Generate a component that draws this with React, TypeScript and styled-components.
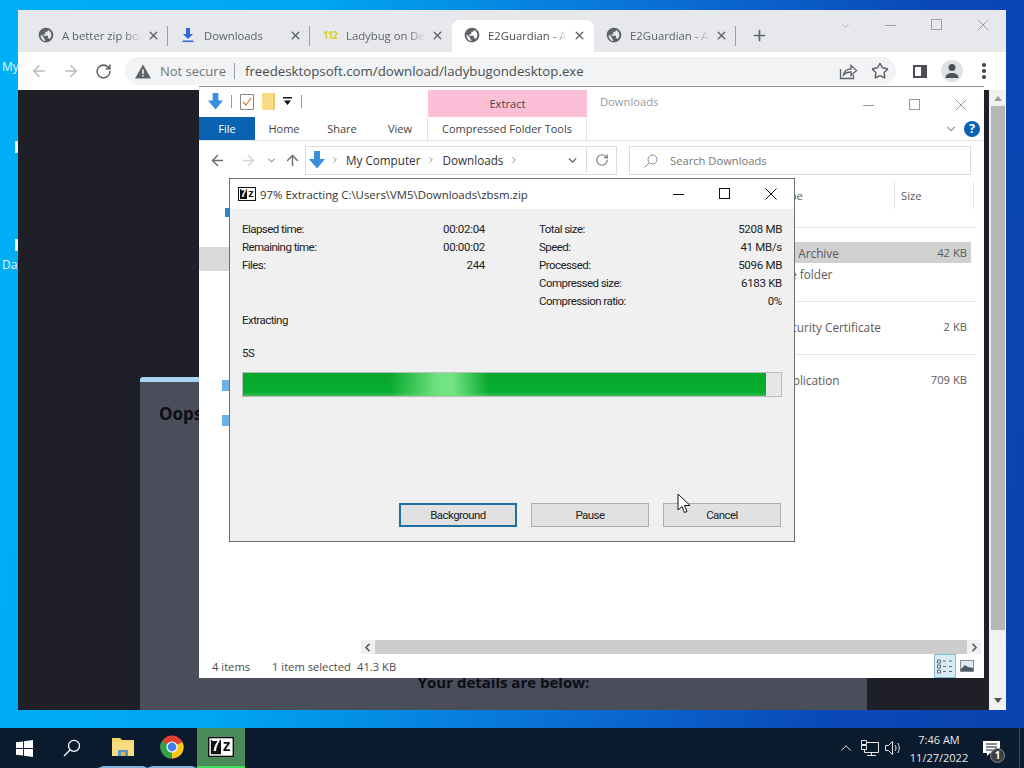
import styled, { createGlobalStyle } from 'styled-components';
import { ArrowLeft, ArrowRight, ArrowUp, ChevronDown, ChevronLeft, ChevronRight, ChevronUp, Plus, RotateCw, Star, X } from 'lucide-react';

const tabs = [
  { title: 'A better zip bomb', icon: 'globe' },
  { title: 'Downloads', icon: 'download' },
  { title: 'Ladybug on Desktop', icon: 'num' },
  { title: 'E2Guardian - Access Denied', icon: 'globe', active: true },
  { title: 'E2Guardian - Access Denied', icon: 'globe' },
];

const leftStats = [
  ['Elapsed time:', '00:02:04'],
  ['Remaining time:', '00:00:02'],
  ['Files:', '244'],
];

const rightStats = [
  ['Total size:', '5208 MB'],
  ['Speed:', '41 MB/s'],
  ['Processed:', '5096 MB'],
  ['Compressed size:', '6183 KB'],
  ['Compression ratio:', '0%'],
];

function Globe() {
  return (
    <svg width="16" height="16" viewBox="0 0 24 24" fill="#5f6368">
      <path d="M12 1C5.9 1 1 5.9 1 12s4.9 11 11 11 11-4.9 11-11S18.1 1 12 1zm-1 19.9c-4-.5-7-3.9-7-7.9 0-.6.1-1.200.2-1.800L9 16v1c0 1.100.9 2 2 2v1.900zm6.900-2.500c-.3-.8-1-1.400-1.900-1.400h-1v-3c0-.6-.4-1-1-1H8v-2h2c.6 0 1-.4 1-1V7h2c1.100 0 2-.9 2-2v-.4c2.900 1.200 5 4.100 5 7.400 0 2.100-.8 4-2.100 5.400z" />
    </svg>
  );
}

function DownloadIcon() {
  return (
    <svg width="16" height="16" viewBox="0 0 16 16" fill="#3367d6">
      <path d="M6 1h4v6h3l-5 5-5-5h3zM2.500 13.500h11V15h-11z" />
    </svg>
  );
}

function BlueArrow({ size = 18 }: { size?: number }) {
  return (
    <svg width={size} height={size} viewBox="0 0 18 18" fill="#3a8fdc">
      <path d="M6 0h6v8h5l-8 9.500L1 8h5z" />
    </svg>
  );
}

function Caption({ kind, color }: { kind: 'min' | 'max' | 'close'; color: string }) {
  return (
    <CaptionButton>
      <svg width="12" height="12" viewBox="0 0 12 12" fill="none" stroke={color} strokeWidth="1">
        {kind === 'min' && <path d="M0 6.500h11" />}
        {kind === 'max' && <rect x="0.500" y="0.500" width="10" height="10" />}
        {kind === 'close' && <path d="M0.500 0.500l11 11M11.500 0.500l-11 11" />}
      </svg>
    </CaptionButton>
  );
}

function SevenZip() {
  return (
    <SevenLogo>
      <SevenDigit>7</SevenDigit>
      <SevenLetter>z</SevenLetter>
    </SevenLogo>
  );
}

function ChromeWindow() {
  return (
    <BrowserWindow>
      <TabStrip>
        {tabs.map((tab, i) => (
          <Tab key={i} $active={tab.active} $sep={!tab.active && i !== 2}>
            <TabIcon>
              {tab.icon === 'globe' && <Globe />}
              {tab.icon === 'download' && <DownloadIcon />}
              {tab.icon === 'num' && <NumIcon>112</NumIcon>}
            </TabIcon>
            <TabTitle $active={tab.active}>{tab.title}</TabTitle>
            <X size={13} strokeWidth={2.6} color="#5f6368" />
          </Tab>
        ))}
        <NewTab>
          <Plus size={17} strokeWidth={2.4} color="#5f6368" />
        </NewTab>
        <StripCaptions>
          <CaptionButton>
            <ChevronDown size={15} strokeWidth={1} color="#a8a8a8" />
          </CaptionButton>
          <Caption kind="min" color="#a0a0a0" />
          <Caption kind="max" color="#a0a0a0" />
          <Caption kind="close" color="#a0a0a0" />
        </StripCaptions>
      </TabStrip>
      <Toolbar>
        <ToolButton><ArrowLeft size={18} color="#b8bbbf" /></ToolButton>
        <ToolButton><ArrowRight size={18} color="#b8bbbf" /></ToolButton>
        <ToolButton><RotateCw size={17} strokeWidth={2.2} color="#5f6368" /></ToolButton>
        <Omnibox>
          <svg width="16" height="15" viewBox="0 0 16 15" fill="#5f6368">
            <path d="M8 0.500L16 14.500H0zM7.200 5.500v4.500h1.600V5.500zM7.200 11v1.600h1.600V11z" fillRule="evenodd" />
          </svg>
          <NotSecure>Not secure</NotSecure>
          <OmniDivider />
          <UrlText>freedesktopsoft.com/download/ladybugondesktop.exe</UrlText>
          <OmniIcon>
            <svg width="20" height="20" viewBox="0 0 20 20" fill="none" stroke="#5f6368" strokeWidth="1.300">
              <path d="M2.500 8v9.500h13V14M5.500 14c.8-4 3.500-6 7.500-6V4.500l5.500 5-5.500 5V11c-3 0-5.500.8-7.500 3z" />
            </svg>
          </OmniIcon>
          <OmniIcon><Star size={18} strokeWidth={2} color="#5f6368" /></OmniIcon>
        </Omnibox>
        <PanelIcon />
        <Avatar>
          <svg width="16" height="16" viewBox="0 0 16 16" fill="#4d5156">
            <circle cx="8" cy="4.500" r="3.500" />
            <path d="M1.500 15c0-3.500 3-5 6.500-5s6.500 1.500 6.500 5z" />
          </svg>
        </Avatar>
        <MenuDots><i /><i /><i /></MenuDots>
      </Toolbar>
      <PageRow>
        <Page>
          <ModalCard>
            <OopsTitle>Oops! There was a problem</OopsTitle>
            <DetailsLine>Your details are below:</DetailsLine>
          </ModalCard>
        </Page>
        <PageScroll>
          <ChevronUpMark />
          <PageThumb />
          <ChevronDownMark />
        </PageScroll>
      </PageRow>
    </BrowserWindow>
  );
}

function ExplorerWindow() {
  return (
    <Explorer>
      <TitleRow>
        <QuickAccess>
          <BlueArrow size={17} />
          <QatSep />
          <svg width="16" height="18" viewBox="0 0 16 18" fill="#fff" stroke="#888">
            <path d="M1.500 1.500h13v15h-13z" />
            <path d="M4 9l3 3 5-7" stroke="#d9772b" strokeWidth="1.200" fill="none" />
          </svg>
          <QatFolder />
          <QatMore>
            <svg width="9" height="9" viewBox="0 0 9 9" fill="#111"><path d="M0 0h9v1.500H0zM1 3.500h7L4.500 8z" /></svg>
          </QatMore>
          <QatSep />
        </QuickAccess>
        <ExtractTab>Extract</ExtractTab>
        <WindowName>Downloads</WindowName>
        <Caption kind="min" color="#9a9a9a" />
        <Caption kind="max" color="#9a9a9a" />
        <Caption kind="close" color="#9a9a9a" />
      </TitleRow>
      <RibbonTabs>
        <FileTab>File</FileTab>
        <RibbonTab>Home</RibbonTab>
        <RibbonTab>Share</RibbonTab>
        <RibbonTab>View</RibbonTab>
        <ContextTab>Compressed Folder Tools</ContextTab>
        <RibbonEnd>
          <ChevronDown size={14} color="#a0a0a0" />
          <HelpBadge>?</HelpBadge>
        </RibbonEnd>
      </RibbonTabs>
      <AddressRow>
        <NavButtons>
          <NavSlot $left={10}><ArrowLeft size={17} color="#6b6b6b" /></NavSlot>
          <NavSlot $left={14}><ArrowRight size={17} color="#d4d4d4" /></NavSlot>
          <NavSlot $left={9}><ChevronDown size={11} strokeWidth={3} color="#a0a0a0" /></NavSlot>
          <NavSlot $left={7}><ArrowUp size={17} color="#6b6b6b" /></NavSlot>
        </NavButtons>
        <AddressBox>
          <BlueArrow size={18} />
          <Crumb><ChevronRight size={10} color="#777" /></Crumb>
          <CrumbText>My Computer</CrumbText>
          <Crumb><ChevronRight size={10} color="#777" /></Crumb>
          <CrumbText>Downloads</CrumbText>
          <Crumb><ChevronRight size={10} color="#777" /></Crumb>
          <AddressEnd>
            <ChevronDown size={13} strokeWidth={2.4} color="#555" />
            <RefreshCell><RotateCw size={14} color="#777" /></RefreshCell>
          </AddressEnd>
        </AddressBox>
        <SearchBox>
          <svg width="14" height="14" viewBox="0 0 14 14" fill="none" stroke="#8a8a8a">
            <circle cx="8.500" cy="5.500" r="4.500" />
            <path d="M5.200 8.800L0.500 13.500" />
          </svg>
          Search Downloads
        </SearchBox>
      </AddressRow>
      <ContentRow>
        <NavPane>
          <NavDot />
          <NavSelected />
          <NavDevice $top={109} />
          <NavDevice $top={24} />
        </NavPane>
        <FileArea>
          <ColumnHeader>
            <ColName />
            <ColText>Type</ColText>
            <ColSize>Size</ColSize>
          </ColumnHeader>
          <FileGroup>
            <FileRow $selected>
              <span />
              <TypeCell>ZIP Archive</TypeCell>
              <SizeCell>42 KB</SizeCell>
            </FileRow>
            <FileRow>
              <span />
              <TypeCell>File folder</TypeCell>
              <SizeCell />
            </FileRow>
          </FileGroup>
          <FileGroup>
            <FileRow>
              <span />
              <TypeCell>Security Certificate</TypeCell>
              <SizeCell>2 KB</SizeCell>
            </FileRow>
          </FileGroup>
          <FileGroup>
            <FileRow>
              <span />
              <TypeCell>Application</TypeCell>
              <SizeCell>709 KB</SizeCell>
            </FileRow>
          </FileGroup>
        </FileArea>
      </ContentRow>
      <HScrollRow>
        <ChevronLeft size={13} strokeWidth={3} color="#555" />
        <HThumb />
        <ChevronRight size={13} strokeWidth={3} color="#555" />
      </HScrollRow>
      <StatusBar>
        <StatusText $width={60}>4 items</StatusText>
        <StatusText $width={85}>1 item selected</StatusText>
        <StatusText $width={70}>41.3 KB</StatusText>
        <ViewButtons>
          <ViewDetails>
            <svg width="18" height="16" viewBox="0 0 18 16" fill="none" stroke="#666">
              <path d="M1.500 2h3v3h-3zM1.500 7h3v3h-3zM1.500 12h3v3h-3z" fill="#eee" />
              <path d="M7 3h4M13 3h4M7 8.500h4M13 8.500h4M7 13.500h4M13 13.500h4" strokeDasharray="3 1" />
            </svg>
          </ViewDetails>
          <svg width="14" height="12" viewBox="0 0 14 12">
            <rect x="0.500" y="0.500" width="13" height="11" fill="#dfe8ee" stroke="#8a8a8a" />
            <path d="M1 9l4-4 3 2 5 1v3H1z" fill="#4a5a68" />
          </svg>
        </ViewButtons>
      </StatusBar>
    </Explorer>
  );
}

function ExtractDialog() {
  return (
    <Dialog>
      <DialogTitle>
        <DialogLogo><SevenZip /></DialogLogo>
        <DialogName>97% Extracting C:\Users\VM5\Downloads\zbsm.zip</DialogName>
        <Caption kind="min" color="#111" />
        <Caption kind="max" color="#111" />
        <Caption kind="close" color="#111" />
      </DialogTitle>
      <DialogBody>
        <StatColumns>
          <StatList>
            {leftStats.map(([label, value]) => (
              <StatRow key={label}>
                <span>{label}</span>
                <StatValue>{value}</StatValue>
              </StatRow>
            ))}
          </StatList>
          <StatList>
            {rightStats.map(([label, value]) => (
              <StatRow key={label}>
                <span>{label}</span>
                <StatValue>{value}</StatValue>
              </StatRow>
            ))}
          </StatList>
        </StatColumns>
        <Operation>Extracting</Operation>
        <CurrentFile>5S</CurrentFile>
        <ProgressTrack>
          <ProgressFill />
        </ProgressTrack>
        <ButtonRow>
          <DialogButton $focused>Background</DialogButton>
          <DialogButton>Pause</DialogButton>
          <DialogButton>Cancel</DialogButton>
        </ButtonRow>
      </DialogBody>
    </Dialog>
  );
}

function Taskbar() {
  return (
    <TaskbarBar>
      <StartSlot $width={48}>
        <svg width="17" height="17" viewBox="0 0 18 18" fill="#fff">
          <path d="M0 2.500l7.500-1v7H0zM8.500 1.300L18 0v8.500H8.500zM0 9.500h7.500v7l-7.500-1zM8.500 9.500H18V18l-9.500-1.300z" />
        </svg>
      </StartSlot>
      <StartSlot $width={48}>
        <svg width="18" height="18" viewBox="0 0 18 18" fill="none" stroke="#fff" strokeWidth="1.300">
          <circle cx="11" cy="6.800" r="5.500" />
          <path d="M7 11L1 17" />
        </svg>
      </StartSlot>
      <AppSlot $mark="#7fb2dc" $left={2}>
        <svg width="22" height="20" viewBox="0 0 22 20">
          <path d="M0 1h8l2 2h12v16H0z" fill="#f5d36b" />
          <path d="M0 5h22v14H0z" fill="#f7dc80" />
          <path d="M6 13h10v6H6z" fill="#5a94c8" />
          <path d="M9 15h4v4H9z" fill="#d8b45a" />
        </svg>
      </AppSlot>
      <AppSlot $mark="#7fb2dc" $left={-1}>
        <svg width="24" height="24" viewBox="0 0 24 24">
          <circle cx="12" cy="12" r="11.500" fill="#e0402f" />
          <path d="M12 12L22.500 7A11.500 11.500 0 0 1 12 23.500z" fill="#f8c91c" />
          <path d="M12 12L12 23.500A11.500 11.500 0 0 1 2 6z" fill="#2fa34a" />
          <circle cx="12" cy="12" r="5.600" fill="#fff" />
          <circle cx="12" cy="12" r="4.400" fill="#3f7fe8" />
        </svg>
      </AppSlot>
      <ActiveApp><SevenZip /></ActiveApp>
      <Tray>
        <TraySlot $width={24}>
          <ChevronUp size={18} strokeWidth={1.3} color="#e8e8e8" />
        </TraySlot>
        <TraySlot $width={24}>
          <svg width="18" height="17" viewBox="0 0 18 17" fill="none" stroke="#e8e8e8">
            <path d="M3.500 2.500h14v10h-14zM10.500 12.500v3M6 15.500h9" />
            <path d="M0.500 0.500h5v4h-5zM0.500 5.500h5v4h-5z" fill="#0a1b2d" />
          </svg>
        </TraySlot>
        <TraySlot $width={22}>
          <svg width="16" height="14" viewBox="0 0 16 14" fill="none" stroke="#e8e8e8">
            <path d="M0.500 4.500h3l4-4v13l-4-4h-3zM10 4c1.300 1.600 1.300 4.400 0 6M12.500 2c2.300 3 2.300 7 0 10" />
          </svg>
        </TraySlot>
        <Clock>
          <span>7:46 AM</span>
          <span>11/27/2022</span>
        </Clock>
        <Notify>
          <svg width="17" height="15" viewBox="0 0 17 15" fill="#fff">
            <path d="M0 0h17v12H7l-3 3v-3H0z" />
            <path d="M3 3h11M3 6h11M3 9h7" stroke="#0a1b2d" />
          </svg>
          <NotifyCount>1</NotifyCount>
        </Notify>
        <ShowDesktop />
      </Tray>
    </TaskbarBar>
  );
}

export default function App() {
  return (
    <>
      <GlobalStyle />
      <Screen>
        <Desktop>
          <DesktopLabel $top={58}>My</DesktopLabel>
          <DesktopMark $top={141} />
          <DesktopMark $top={239} />
          <DesktopLabel $top={256}>Da</DesktopLabel>
          <ChromeWindow />
          <ExplorerWindow />
          <ExtractDialog />
          <Cursor>
            <svg width="15" height="22" viewBox="0 0 15 22" fill="#fff" stroke="#111" strokeWidth="1">
              <path d="M1 1v16l4-3.500 2.500 6 2.500-1-2.500-6h5.500z" />
            </svg>
          </Cursor>
        </Desktop>
        <Taskbar />
      </Screen>
    </>
  );
}

const GlobalStyle = createGlobalStyle`
  html, body {
    margin: 0;
    padding: 0;
    background: #000;
  }
  * {
    box-sizing: border-box;
  }
`;

const Screen = styled.div`
  width: 1024px;
  height: 768px;
  display: flex;
  flex-direction: column;
  overflow: hidden;
  font-family: 'Open Sans', 'Noto Sans', sans-serif;
`;

const Desktop = styled.div`
  position: relative;
  flex: 1;
  background: linear-gradient(98deg, #00b0f6 0%, #00a6f0 28%, #0a70d6 58%, #0a4ab8 82%, #0a42ae 100%);
`;

const DesktopLabel = styled.span<{ $top: number }>`
  position: absolute;
  left: 2px;
  top: ${(p) => p.$top}px;
  font-size: 12px;
  color: #e8f6ff;
`;

const DesktopMark = styled.span<{ $top: number }>`
  position: absolute;
  left: 15px;
  top: ${(p) => p.$top}px;
  width: 3px;
  height: 12px;
  background: #e6f4ff;
`;

const BrowserWindow = styled.div`
  position: absolute;
  left: 18px;
  top: 10px;
  width: 988px;
  height: 700px;
  display: flex;
  flex-direction: column;
  background: #fff;
`;

const TabStrip = styled.div`
  height: 42px;
  display: flex;
  align-items: flex-end;
  padding-left: 8px;
  background: #e6e8eb;
`;

const Tab = styled.div<{ $active?: boolean; $sep?: boolean }>`
  position: relative;
  width: 142px;
  height: 32px;
  display: flex;
  align-items: center;
  padding: 0 8px 2px 12px;
  border-radius: 8px 8px 0 0;
  background: ${(p) => (p.$active ? '#fff' : 'transparent')};

  &::after {
    content: '';
    display: ${(p) => (p.$sep ? 'block' : 'none')};
    position: absolute;
    right: 0;
    top: 6px;
    height: 20px;
    width: 1px;
    background: #9a9da1;
  }
`;

const TabIcon = styled.span`
  width: 16px;
  height: 16px;
  display: flex;
  align-items: center;
  justify-content: center;
  flex: none;
`;

const NumIcon = styled.span`
  font-size: 10px;
  font-weight: 700;
  letter-spacing: -1px;
  color: #d9d21c;
`;

const TabTitle = styled.span<{ $active?: boolean }>`
  flex: 1;
  margin: 0 6px 0 8px;
  overflow: hidden;
  white-space: nowrap;
  font-size: 11.300px;
  color: ${(p) => (p.$active ? '#4a4d51' : '#5f6368')};
  mask-image: linear-gradient(90deg, #000 80%, transparent 100%);
`;

const NewTab = styled.span`
  width: 46px;
  height: 32px;
  display: flex;
  align-items: center;
  justify-content: center;
  padding-bottom: 2px;
`;

const StripCaptions = styled.div`
  margin-left: auto;
  height: 100%;
  display: flex;
  align-items: flex-start;
`;

const CaptionButton = styled.span`
  width: 46px;
  height: 30px;
  display: flex;
  align-items: center;
  justify-content: center;
  flex: none;
`;

const Toolbar = styled.div`
  height: 38px;
  display: flex;
  align-items: center;
  padding-left: 5px;
  background: #fff;
`;

const ToolButton = styled.span`
  width: 32px;
  height: 28px;
  display: flex;
  align-items: center;
  justify-content: center;
  flex: none;
`;

const Omnibox = styled.div`
  width: 771px;
  height: 28px;
  margin-left: 6px;
  display: flex;
  align-items: center;
  padding-left: 10px;
  border-radius: 14px;
  background: #f1f3f4;
`;

const NotSecure = styled.span`
  margin-left: 9px;
  font-size: 13px;
  color: #70757a;
`;

const OmniDivider = styled.span`
  width: 1px;
  height: 16px;
  margin: 0 10px 0 8px;
  background: #9a9da1;
`;

const UrlText = styled.span`
  flex: 1;
  font-size: 13.250px;
  color: #4a4d51;
  white-space: nowrap;
`;

const OmniIcon = styled.span`
  width: 32px;
  height: 28px;
  display: flex;
  align-items: center;
  justify-content: center;
  flex: none;
`;

const PanelIcon = styled.span`
  width: 14px;
  height: 13px;
  margin-left: 17px;
  border: 2px solid #4a4d51;
  border-right-width: 6px;
  flex: none;
`;

const Avatar = styled.span`
  width: 22px;
  height: 22px;
  margin-left: 14px;
  display: flex;
  align-items: center;
  justify-content: center;
  border-radius: 50%;
  background: #dee1e6;
  flex: none;
`;

const MenuDots = styled.span`
  margin-left: 19px;
  display: flex;
  flex-direction: column;
  gap: 2.500px;

  i {
    width: 3.500px;
    height: 3.500px;
    border-radius: 50%;
    background: #4a4d51;
  }
`;

const PageRow = styled.div`
  flex: 1;
  min-height: 0;
  display: flex;
`;

const Page = styled.div`
  flex: 1;
  display: flex;
  padding: 287px 122px 0;
  background: #1f2027;
`;

const ModalCard = styled.div`
  flex: 1;
  display: flex;
  flex-direction: column;
  justify-content: space-between;
  padding: 20px 19px 18px;
  background: #4a4d5a;
  border-top: 5px solid #a8d4f2;
  border-radius: 3px 3px 0 0;
`;

const OopsTitle = styled.div`
  font-size: 17px;
  font-weight: 700;
  color: #0c0e18;
  white-space: nowrap;
`;

const DetailsLine = styled.div`
  text-align: center;
  font-size: 15px;
  font-weight: 700;
  color: #0c0e18;
`;

const PageScroll = styled.div`
  width: 17px;
  display: flex;
  flex-direction: column;
  align-items: center;
  background: #f1f1f1;
`;

const ChevronUpMark = styled.span`
  margin: 6px 0 5px;
  border: 4px solid transparent;
  border-top: 0;
  border-bottom: 5px solid #9c9c9c;
`;

const PageThumb = styled.span`
  width: 14px;
  height: 524px;
  background: #b6b6b6;
`;

const ChevronDownMark = styled.span`
  margin-top: auto;
  margin-bottom: 7px;
  border: 4px solid transparent;
  border-bottom: 0;
  border-top: 5px solid #505050;
`;

const Explorer = styled.div`
  position: absolute;
  left: 199px;
  top: 86px;
  width: 785px;
  height: 592px;
  display: flex;
  flex-direction: column;
  border-top: 1px solid #8f8f8f;
  background: #fff;
  color: #4a4a4a;
  font-size: 11.200px;
`;

const TitleRow = styled.div`
  height: 30px;
  display: flex;
  align-items: stretch;
  padding-top: 3px;
`;

const QuickAccess = styled.div`
  width: 229px;
  display: flex;
  align-items: center;
  gap: 7px;
  padding: 0 0 4px 8px;
  flex: none;
`;

const QatSep = styled.span`
  width: 1px;
  height: 13px;
  background: #9a9a9a;
`;

const QatFolder = styled.span`
  width: 13px;
  height: 17px;
  background: #f9dc85;
  border-right: 2px solid #e9c76a;
  border-radius: 1px;
`;

const QatMore = styled.span`
  display: flex;
  margin: 0 2px 0 1px;
`;

const ExtractTab = styled.div`
  width: 159px;
  display: flex;
  align-items: center;
  justify-content: center;
  background: #fcbfd8;
  color: #444;
  flex: none;
`;

const WindowName = styled.div`
  flex: 1;
  display: flex;
  align-items: center;
  padding: 0 0 4px 13px;
  color: #9a9a9a;
`;

const RibbonTabs = styled.div`
  height: 24px;
  display: flex;
  align-items: stretch;
  border-bottom: 1px solid #e2e2e2;
  font-size: 11px;
`;

const FileTab = styled.div`
  width: 56px;
  display: flex;
  align-items: center;
  justify-content: center;
  background: #0a63b2;
  color: #fff;
`;

const RibbonTab = styled.div`
  width: 58px;
  display: flex;
  align-items: center;
  justify-content: center;
  color: #444;
`;

const ContextTab = styled.div`
  width: 160px;
  display: flex;
  align-items: center;
  justify-content: center;
  margin-left: -2px;
  border-left: 1px solid #e2e2e2;
  border-right: 1px solid #e2e2e2;
  color: #444;
`;

const RibbonEnd = styled.div`
  flex: 1;
  display: flex;
  align-items: center;
  justify-content: flex-end;
  gap: 6px;
  padding-right: 4px;
`;

const HelpBadge = styled.span`
  width: 16px;
  height: 16px;
  display: flex;
  align-items: center;
  justify-content: center;
  border-radius: 50%;
  background: #0a63b2;
  color: #fff;
  font-size: 12px;
  font-weight: 700;
`;

const AddressRow = styled.div`
  height: 38px;
  display: flex;
  align-items: flex-start;
  padding: 5px 13px 0 0;
`;

const NavButtons = styled.div`
  width: 106px;
  height: 29px;
  display: flex;
  align-items: center;
  flex: none;
`;

const NavSlot = styled.span<{ $left: number }>`
  display: flex;
  margin-left: ${(p) => p.$left}px;
`;

const AddressBox = styled.div`
  width: 312px;
  height: 29px;
  display: flex;
  align-items: center;
  padding: 0 0 1px 2px;
  border: 1px solid #dcdcdc;
  color: #333;
  font-size: 11.700px;
  flex: none;
`;

const Crumb = styled.span`
  display: flex;
  margin: 0 6px 0 4px;
`;

const CrumbText = styled.span`
  margin-right: 2px;
  white-space: nowrap;
`;

const AddressEnd = styled.span`
  margin-left: auto;
  height: 100%;
  display: flex;
  align-items: center;
  gap: 7px;
`;

const RefreshCell = styled.span`
  width: 30px;
  height: 100%;
  display: flex;
  align-items: center;
  justify-content: center;
  border-left: 1px solid #dcdcdc;
`;

const SearchBox = styled.div`
  flex: 1;
  height: 29px;
  margin-left: 12px;
  display: flex;
  align-items: center;
  gap: 12px;
  padding-left: 14px;
  border: 1px solid #dcdcdc;
  color: #777;
`;

const ContentRow = styled.div`
  flex: 1;
  min-height: 0;
  display: flex;
`;

const NavPane = styled.div`
  width: 162px;
  padding-top: 29px;
  flex: none;
`;

const NavDot = styled.span`
  display: block;
  width: 4px;
  height: 9px;
  margin-left: 26px;
  background: #2f86c8;
`;

const NavSelected = styled.span`
  display: block;
  height: 24px;
  margin-top: 30px;
  background: #d9d9d9;
`;

const NavDevice = styled.span<{ $top: number }>`
  display: block;
  width: 14px;
  height: 11px;
  margin: ${(p) => p.$top}px 0 0 23px;
  background: #6db2e6;
`;

const FileArea = styled.div`
  flex: 1;
  padding-top: 3px;
`;

const ColumnHeader = styled.div`
  height: 27px;
  margin-bottom: 18px;
  display: grid;
  grid-template-columns: 417px 116px 80px;
  align-items: center;
  color: #5a5a5a;
`;

const ColName = styled.span``;

const ColText = styled.span`
  height: 100%;
  display: flex;
  align-items: center;
`;

const ColSize = styled.span`
  height: 100%;
  display: flex;
  align-items: center;
  padding-left: 6px;
  border-left: 1px solid #e5e5e5;
  border-right: 1px solid #e5e5e5;
`;

const FileGroup = styled.div`
  width: 616px;
  padding: 14px 0 17px;
  border-top: 1px solid #e6e6e6;
`;

const FileRow = styled.div<{ $selected?: boolean }>`
  width: 610px;
  height: 21px;
  display: grid;
  grid-template-columns: 417px 116px 73px;
  align-items: center;
  color: #5a5a5a;
  background: ${(p) => (p.$selected ? '#d0d0d0' : 'transparent')};
`;

const TypeCell = styled.span`
  font-size: 11.800px;
  white-space: nowrap;
`;

const SizeCell = styled.span`
  text-align: right;
`;

const HScrollRow = styled.div`
  height: 14px;
  margin-left: 162px;
  margin-right: 3px;
  display: flex;
  align-items: center;
  gap: 1px;
  background: #f0f0f0;
`;

const HThumb = styled.span`
  flex: 1;
  height: 100%;
  background: #cdcdcd;
`;

const StatusBar = styled.div`
  height: 24px;
  display: flex;
  align-items: center;
  padding: 0 10px 0 13px;
  color: #4a4a4a;
`;

const StatusText = styled.span<{ $width: number }>`
  width: ${(p) => p.$width}px;
  padding-top: 1px;
  white-space: nowrap;
`;

const ViewButtons = styled.div`
  margin-left: auto;
  height: 100%;
  display: flex;
  align-items: center;
  gap: 4px;
`;

const ViewDetails = styled.span`
  width: 22px;
  height: 100%;
  display: flex;
  align-items: center;
  justify-content: center;
  background: #d5ecf5;
  border: 1px solid #7fbcd4;
`;

const Dialog = styled.div`
  position: absolute;
  left: 229px;
  top: 178px;
  width: 566px;
  height: 364px;
  display: flex;
  flex-direction: column;
  border: 1px solid #707070;
  background: #f0f0f0;
  color: #222;
`;

const DialogTitle = styled.div`
  height: 30px;
  display: flex;
  align-items: center;
  padding-left: 8px;
  background: #fff;
`;

const DialogLogo = styled.span`
  display: flex;
  flex: none;
`;

const DialogName = styled.span`
  flex: 1;
  margin-left: 4px;
  font-size: 11.400px;
  color: #333;
  white-space: nowrap;
`;

const SevenLogo = styled.span`
  height: 14px;
  display: flex;
  align-items: stretch;
  gap: 1px;
  padding: 1px;
  border: 1.500px solid #111;
  background: #fff;
  font-family: 'Liberation Sans', sans-serif;
  font-size: 11px;
  font-weight: 700;
  line-height: 9px;
`;

const SevenDigit = styled.span`
  width: 7px;
  text-align: center;
  background: #111;
  color: #fff;
`;

const SevenLetter = styled.span`
  width: 6px;
  text-align: center;
  color: #111;
`;

const DialogBody = styled.div`
  flex: 1;
  display: flex;
  flex-direction: column;
  padding: 11px 12px 14px 12px;
  font-family: 'Roboto', 'Liberation Sans', sans-serif;
  font-size: 11.500px;
  letter-spacing: -0.550px;
`;

const StatColumns = styled.div`
  display: flex;
  justify-content: space-between;
  height: 91px;
  flex: none;
`;

const StatList = styled.div`
  width: 243px;
  display: flex;
  flex-direction: column;
`;

const StatRow = styled.div`
  height: 18px;
  display: flex;
  align-items: center;
  justify-content: space-between;
`;

const StatValue = styled.span`
  letter-spacing: -0.300px;
`;

const Operation = styled.div`
  height: 18px;
  line-height: 18px;
`;

const CurrentFile = styled.div`
  margin-top: 15px;
  height: 18px;
  line-height: 18px;
`;

const ProgressTrack = styled.div`
  height: 25px;
  margin-top: 10px;
  background: #e6e6e6;
  border: 1px solid #bcbcbc;
`;

const ProgressFill = styled.div`
  width: 97.200%;
  height: 100%;
  background:
    linear-gradient(90deg, transparent 28%, #6fe07f 37%, #74e484 40%, transparent 47%),
    linear-gradient(180deg, #05a52a 0%, #08ae30 85%, #3cc05a 100%);
`;

const ButtonRow = styled.div`
  margin-top: auto;
  display: flex;
  justify-content: flex-end;
  gap: 14px;
  padding-right: 1px;
`;

const DialogButton = styled.div<{ $focused?: boolean }>`
  width: 118px;
  height: 24px;
  display: flex;
  align-items: center;
  justify-content: center;
  background: #e1e1e1;
  border: ${(p) => (p.$focused ? '2px solid #1f6f9f' : '1px solid #adadad')};
`;

const Cursor = styled.span`
  position: absolute;
  left: 677px;
  top: 493px;
  display: flex;
`;

const TaskbarBar = styled.div`
  height: 40px;
  display: flex;
  align-items: stretch;
  background: #0a1b2d;
  flex: none;
`;

const StartSlot = styled.span<{ $width: number }>`
  width: ${(p) => p.$width}px;
  display: flex;
  align-items: center;
  justify-content: center;
`;

const AppSlot = styled.span<{ $mark: string; $left?: number }>`
  width: 50px;
  margin-left: ${(p) => p.$left ?? 0}px;
  display: flex;
  align-items: center;
  justify-content: center;
  border-bottom: 2px solid ${(p) => p.$mark};
  border-left: 5px solid #0a1b2d;
  border-right: 5px solid #0a1b2d;
`;

const ActiveApp = styled.span`
  width: 48px;
  display: flex;
  align-items: center;
  justify-content: center;
  background: #4a8a58;
  border-bottom: 2px solid #3fe060;

  & > span {
    transform: scale(1.450);
  }
`;

const Tray = styled.div`
  margin-left: auto;
  display: flex;
  align-items: center;
  color: #e8e8e8;
`;

const TraySlot = styled.span<{ $width: number }>`
  width: ${(p) => p.$width}px;
  display: flex;
  justify-content: center;
`;

const Clock = styled.span`
  width: 70px;
  display: flex;
  flex-direction: column;
  align-items: center;
  gap: 1px;
  font-size: 11px;
  line-height: 17px;
`;

const Notify = styled.span`
  position: relative;
  width: 38px;
  display: flex;
  justify-content: center;
  padding-right: 4px;
`;

const NotifyCount = styled.span`
  position: absolute;
  left: 16px;
  top: 7px;
  width: 15px;
  height: 15px;
  display: flex;
  align-items: center;
  justify-content: center;
  border-radius: 50%;
  background: #3c3f44;
  border: 1px solid #888;
  color: #fff;
  font-size: 10px;
  font-weight: 700;
`;

const ShowDesktop = styled.span`
  width: 5px;
  height: 100%;
  margin-left: 7px;
  border-left: 1px solid #3b4a5a;
`;
